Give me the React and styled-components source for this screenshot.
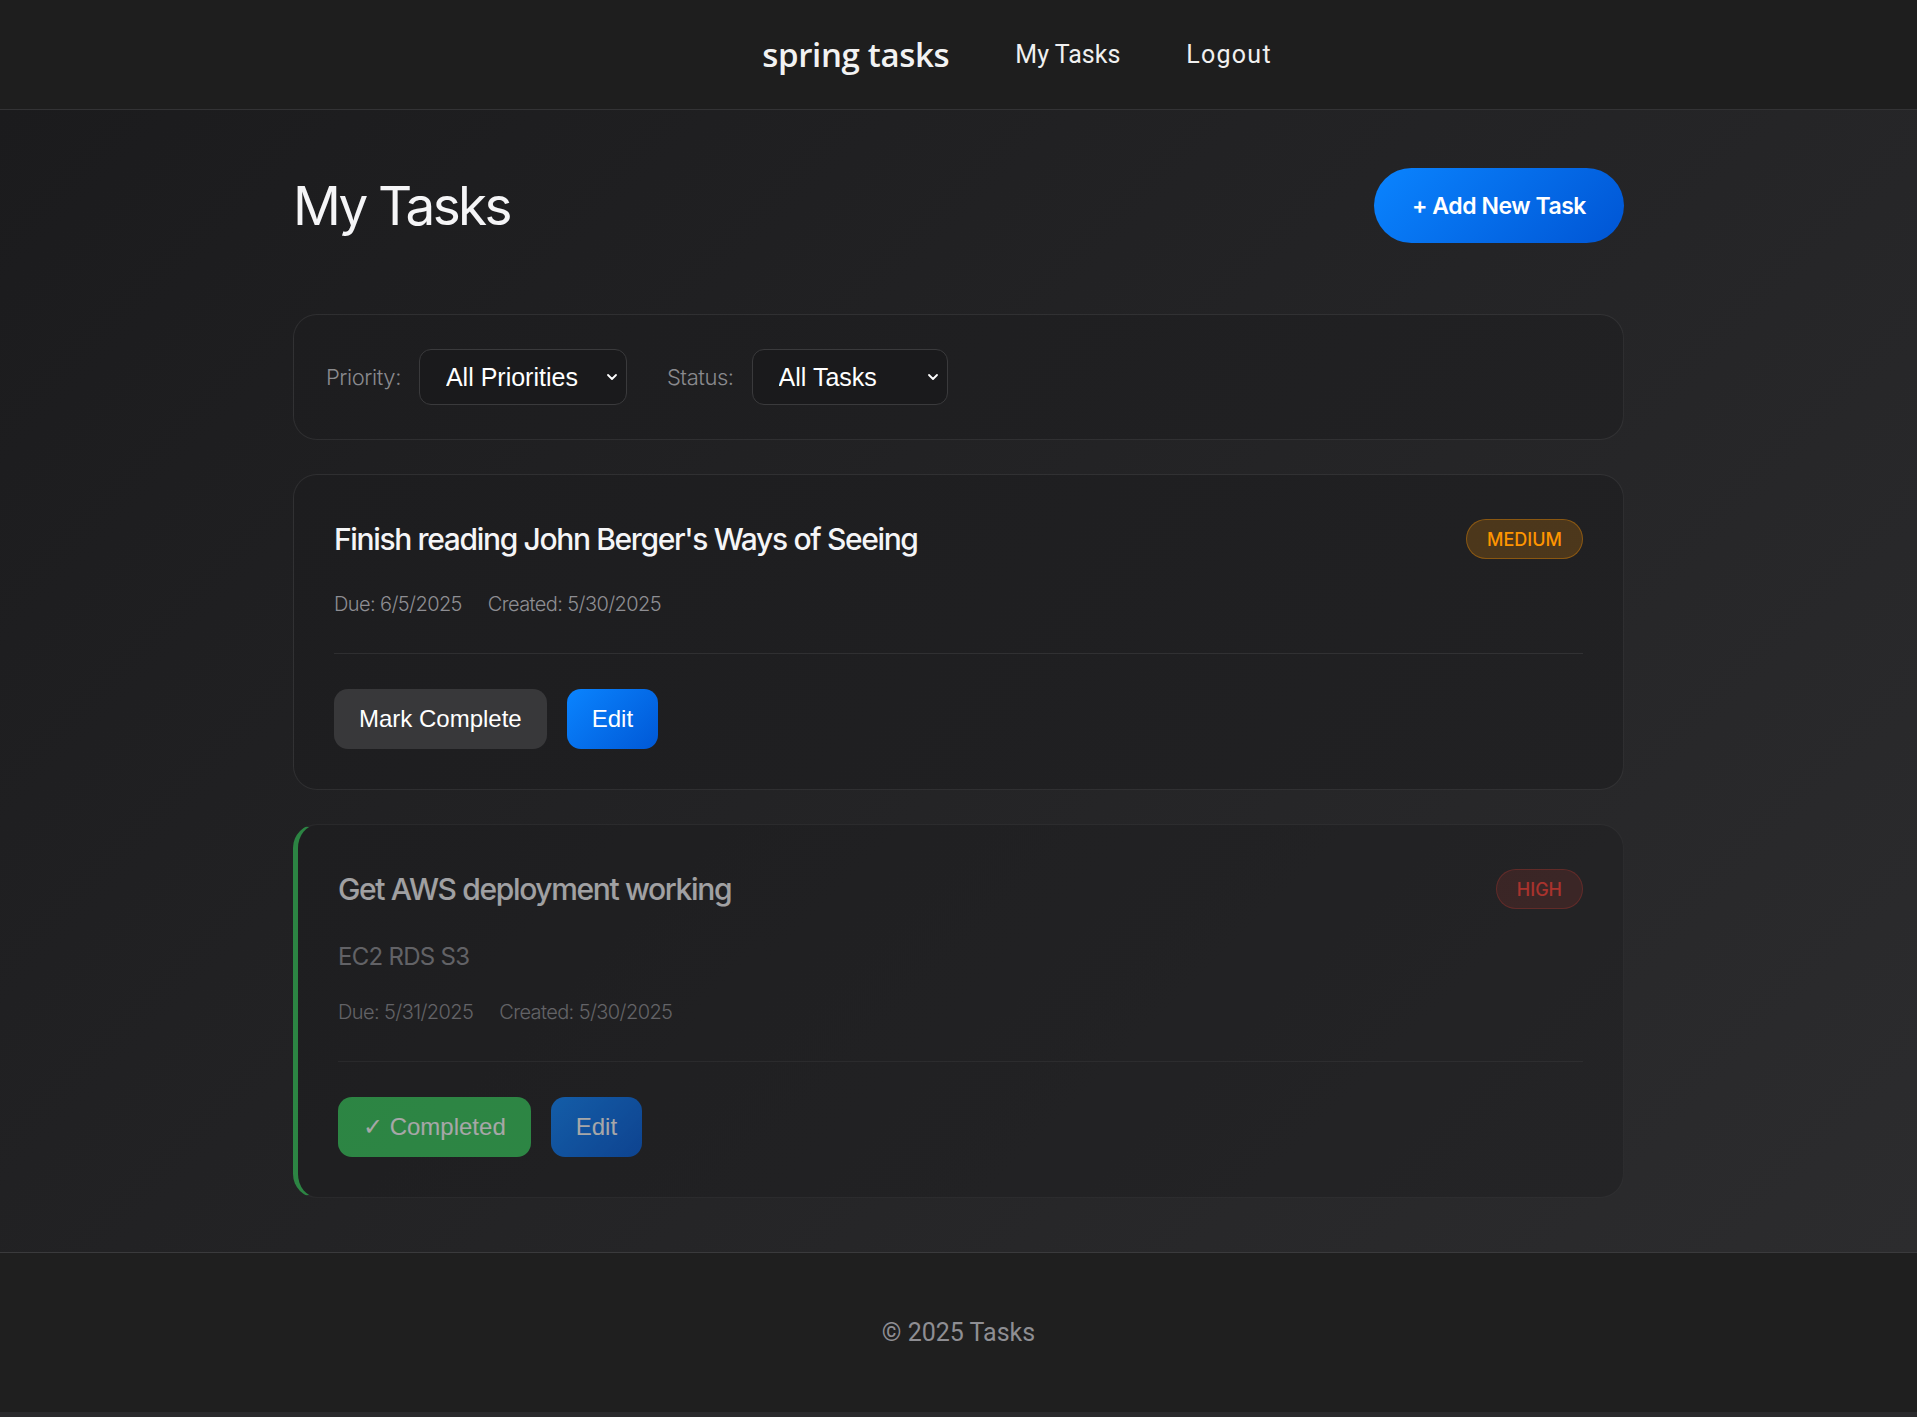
import React from 'react';
import styled, { createGlobalStyle, css } from 'styled-components';

const GlobalStyle = createGlobalStyle`
  html, body { margin: 0; padding: 0; background: #2a2a2c; }
  body { font-family: Inter, "Noto Sans", sans-serif; -webkit-font-smoothing: antialiased; }
  * { box-sizing: border-box; }
`;

const Header = styled.header`
  height: 110px;
  background: #1e1e1e;
  border-bottom: 1px solid #333335;
  display: flex;
  align-items: center;
  justify-content: center;
  padding-left: 117px;
`;

const Brand = styled.a`
  font-family: "Open Sans", sans-serif;
  font-weight: 600;
  font-size: 33px;
  color: #f2f2f2;
  letter-spacing: -0.01em;
  text-decoration: none;
`;

const NavLink = styled.a`
  font-family: Roboto, sans-serif;
  font-size: 25px;
  color: #f0f0f0;
  margin-left: 66px;
  letter-spacing: ${p => p.$spread || 0}em;
  text-decoration: none;
`;

const Main = styled.main`
  background: linear-gradient(135deg, #1b1b1d 0%, #2c2c2e 100%);
  padding: 58px 0 54px;
`;

const Container = styled.div`
  width: 1331px;
  margin: 0 auto;
`;

const HeadingRow = styled.div`
  display: flex;
  justify-content: space-between;
  align-items: center;
  margin-bottom: 71px;
`;

const PageTitle = styled.h1`
  margin: 0;
  font-family: Inter, sans-serif;
  font-weight: 400;
  font-size: 53px;
  letter-spacing: -0.05em;
  color: #f5f5f7;
`;

const AddButton = styled.button`
  height: 75px;
  width: 250px;
  border: none;
  border-radius: 38px;
  background: linear-gradient(135deg, #0a84ff 0%, #0055d4 100%);
  color: #fff;
  font-family: Inter, sans-serif;
  font-weight: 600;
  font-size: 23px;
  letter-spacing: -0.02em;
  cursor: pointer;
`;

const Panel = styled.section`
  background: linear-gradient(135deg, #1d1d1f 0%, #212123 100%);
  border: 1px solid rgba(255, 255, 255, 0.08);
  border-radius: 24px;
`;

const FilterPanel = styled(Panel)`
  display: flex;
  align-items: center;
  padding: 34px 32px;
`;

const FilterLabel = styled.label`
  font-family: Inter, sans-serif;
  font-weight: 300;
  font-size: 22px;
  letter-spacing: -0.02em;
  color: #8a8a8e;
  margin-right: 18px;
`;

const SelectWrap = styled.div`
  position: relative;
  margin-right: 40px;
`;

const Select = styled.select`
  appearance: none;
  -webkit-appearance: none;
  height: 56px;
  width: ${p => p.$w}px;
  background: #1a1a1c;
  border: 1px solid #3a3a3c;
  border-radius: 12px;
  color: #fff;
  font-family: "Liberation Sans", Arial, sans-serif;
  font-size: 25px;
  padding: 0 0 0 26px;
  outline: none;
`;

const Chevron = styled.svg`
  position: absolute;
  right: 8px;
  top: 50%;
  transform: translateY(-50%);
  pointer-events: none;
`;

const TaskCard = styled(Panel)`
  margin-top: 34px;
  padding: 40px;
  ${p => p.$done && css`
    opacity: 0.6;
    border-left: 5px solid #34c759;
  `}
`;

const TitleRow = styled.div`
  display: flex;
  justify-content: space-between;
  align-items: center;
  margin-bottom: 29px;
`;

const TaskTitle = styled.h3`
  margin: 0;
  font-family: Inter, sans-serif;
  font-weight: 500;
  font-size: 30px;
  line-height: 48px;
  letter-spacing: -0.045em;
  color: #f5f5f7;
`;

const badgeColors = {
  HIGH: { fg: '#ff3b30', bg: 'rgba(255, 59, 48, 0.18)', bd: 'rgba(255, 59, 48, 0.35)' },
  MEDIUM: { fg: '#ff9500', bg: 'rgba(255, 149, 0, 0.2)', bd: 'rgba(255, 149, 0, 0.35)' },
  LOW: { fg: '#34c759', bg: 'rgba(52, 199, 89, 0.2)', bd: 'rgba(52, 199, 89, 0.35)' },
};

const Badge = styled.span`
  display: inline-flex;
  align-items: center;
  height: 40px;
  padding: 0 20px;
  border-radius: 20px;
  font-family: Inter, sans-serif;
  font-weight: 500;
  font-size: 18px;
  color: ${p => badgeColors[p.$level].fg};
  background: ${p => badgeColors[p.$level].bg};
  border: 1px solid ${p => badgeColors[p.$level].bd};
`;

const Description = styled.p`
  margin: 0 0 28px;
  font-family: Inter, sans-serif;
  font-size: 24px;
  line-height: 30px;
  letter-spacing: -0.03em;
  color: #8e8e93;
`;

const Meta = styled.div`
  display: flex;
  gap: 26px;
  font-family: Inter, sans-serif;
  font-weight: 300;
  font-size: 20px;
  line-height: 24px;
  letter-spacing: -0.03em;
  color: #8e8e93;
  padding-bottom: 37px;
  border-bottom: 1px solid rgba(255, 255, 255, 0.08);
`;

const Actions = styled.div`
  display: flex;
  gap: 20px;
  padding-top: 35px;
`;

const buttonBg = {
  secondary: '#38383a',
  primary: 'linear-gradient(135deg, #0a84ff 0%, #0058d6 100%)',
  success: '#34c759',
};

const ActionButton = styled.button`
  height: 60px;
  padding: 0 25px;
  border: none;
  border-radius: 14px;
  background: ${p => buttonBg[p.$variant]};
  color: #fff;
  font-family: "Liberation Sans", Arial, sans-serif;
  font-size: 24px;
  cursor: pointer;
`;

const Footer = styled.footer`
  height: 160px;
  background: #1f1f1f;
  border-top: 1px solid #3a3a3c;
  display: flex;
  align-items: center;
  justify-content: center;
  font-family: Roboto, sans-serif;
  font-size: 25px;
  color: #8e8e93;
`;

const ChevronIcon = () => (
  <Chevron width="14" height="14" viewBox="0 0 14 14" fill="none">
    <path d="M3 5l4 4 4-4" stroke="#fff" strokeWidth="1.8" strokeLinecap="round" strokeLinejoin="round" />
  </Chevron>
);

const tasks = [
  {
    id: 1,
    title: "Finish reading John Berger's Ways of Seeing",
    priority: 'MEDIUM',
    due: '6/5/2025',
    created: '5/30/2025',
    done: false,
  },
  {
    id: 2,
    title: 'Get AWS deployment working',
    description: 'EC2 RDS S3',
    priority: 'HIGH',
    due: '5/31/2025',
    created: '5/30/2025',
    done: true,
  },
];

export default function App() {
  return (
    <>
      <GlobalStyle />
      <Header>
        <Brand href="#">spring tasks</Brand>
        <NavLink href="#">My Tasks</NavLink>
        <NavLink href="#" $spread={0.05}>Logout</NavLink>
      </Header>
      <Main>
        <Container>
          <HeadingRow>
            <PageTitle>My Tasks</PageTitle>
            <AddButton>+ Add New Task</AddButton>
          </HeadingRow>

          <FilterPanel>
            <FilterLabel>Priority:</FilterLabel>
            <SelectWrap>
              <Select $w={208} defaultValue="all">
                <option value="all">All Priorities</option>
                <option value="HIGH">High</option>
                <option value="MEDIUM">Medium</option>
                <option value="LOW">Low</option>
              </Select>
              <ChevronIcon />
            </SelectWrap>
            <FilterLabel>Status:</FilterLabel>
            <SelectWrap>
              <Select $w={196} defaultValue="all">
                <option value="all">All Tasks</option>
                <option value="pending">Pending</option>
                <option value="completed">Completed</option>
              </Select>
              <ChevronIcon />
            </SelectWrap>
          </FilterPanel>

          {tasks.map(t => (
            <TaskCard key={t.id} $done={t.done}>
              <TitleRow>
                <TaskTitle>{t.title}</TaskTitle>
                <Badge $level={t.priority}>{t.priority}</Badge>
              </TitleRow>
              {t.description && <Description>{t.description}</Description>}
              <Meta>
                <span>Due: {t.due}</span>
                <span>Created: {t.created}</span>
              </Meta>
              <Actions>
                {t.done ? (
                  <ActionButton $variant="success">✓ Completed</ActionButton>
                ) : (
                  <ActionButton $variant="secondary">Mark Complete</ActionButton>
                )}
                <ActionButton $variant="primary">Edit</ActionButton>
              </Actions>
            </TaskCard>
          ))}
        </Container>
      </Main>
      <Footer>© 2025 Tasks</Footer>
    </>
  );
}
